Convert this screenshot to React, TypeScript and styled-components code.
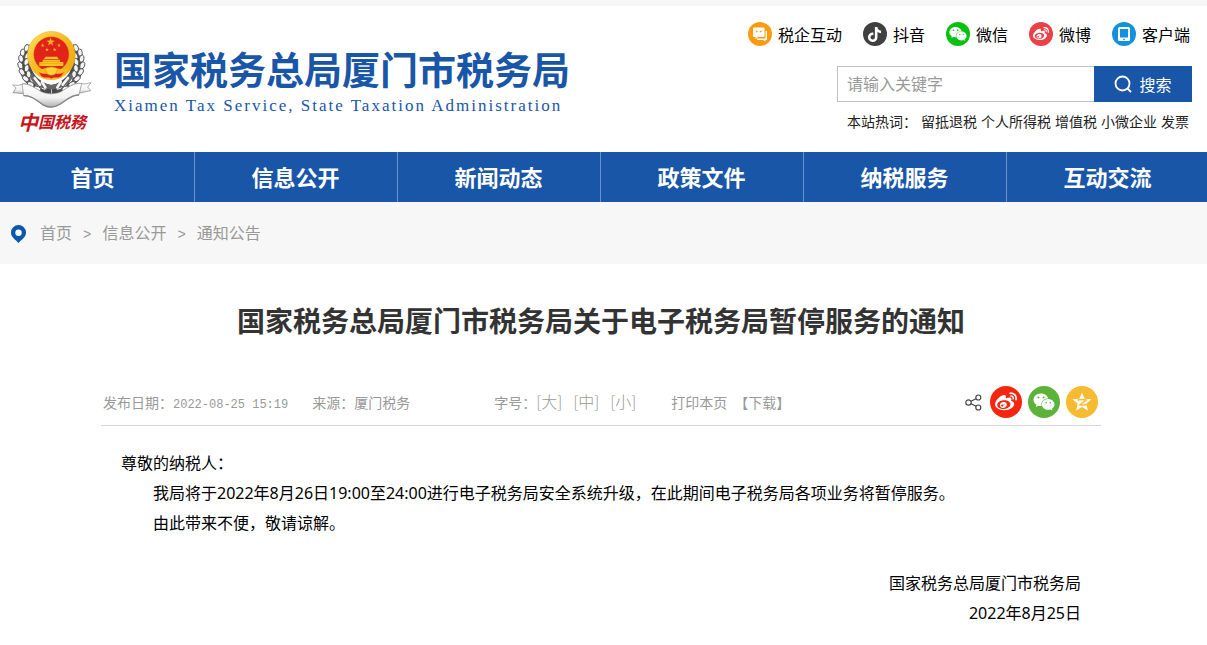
import React from "react";
import styled, { createGlobalStyle } from "styled-components";
import { FaTiktok, FaWeibo, FaWeixin } from "react-icons/fa";

const BLUE = "#1a56a8";
const SANS = '"Noto Sans CJK SC", "Noto Sans", sans-serif';

const GlobalStyle = createGlobalStyle`
  * { box-sizing: border-box; }
  body {
    margin: 0;
    background: #fff;
    color: #000;
    font-family: ${SANS};
    font-size: 16px;
    line-height: 24px;
    overflow-x: hidden;
  }
  a { color: inherit; text-decoration: none; }
  h1, p { margin: 0; }
`;

const Header = styled.header`
  display: flex;
  justify-content: space-between;
  align-items: flex-start;
  height: 152px;
  padding: 16px 15px 0 10px;
  border-top: 6px solid #f7f7f7;
`;

const Brand = styled.a`
  display: flex;
  gap: 20px;
  padding-top: 8px;
`;

const EmblemBox = styled.span`
  display: flex;
  flex-direction: column;
  align-items: center;
  width: 84px;
`;

const Calligraphy = styled.span`
  display: flex;
  align-items: center;
  height: 26px;
  color: #c8141c;
  font-family: "Liberation Serif", "Noto Sans CJK SC", serif;
  font-size: 16px;
  font-style: italic;
  font-weight: 700;
`;

const FirstGlyph = styled.span`
  font-size: 20px;
`;

const BrandText = styled.span`
  display: flex;
  flex-direction: column;
  gap: 5px;
  padding-top: 15px;
  color: ${BLUE};
`;

const BrandName = styled.span`
  font-size: 38px;
  font-weight: 700;
  line-height: 46px;
  white-space: nowrap;
`;

const BrandLatin = styled.span`
  font-family: "Liberation Serif", serif;
  font-size: 17px;
  letter-spacing: 2px;
  line-height: 20px;
  white-space: nowrap;
`;

const Tools = styled.div`
  display: flex;
  flex-direction: column;
  width: 355px;
  align-items: stretch;
`;

const Channels = styled.nav`
  display: flex;
  justify-content: flex-end;
  gap: 21px;
  padding-right: 2px;
`;

const Channel = styled.a`
  display: flex;
  align-items: center;
  gap: 6px;
  white-space: nowrap;
`;

const Disc = styled.span<{ $color: string; $size: number }>`
  display: flex;
  align-items: center;
  justify-content: center;
  width: ${(p) => p.$size}px;
  height: ${(p) => p.$size}px;
  border-radius: 50%;
  background: ${(p) => p.$color};
  color: #fff;
`;

const Search = styled.form`
  display: flex;
  height: 36px;
  margin-top: 20px;
`;

const SearchInput = styled.input`
  flex: 1;
  min-width: 0;
  padding: 0 10px 2px 9px;
  border: 1px solid #bfbfbf;
  border-right: 0;
  background: #fff;
  font: 16px ${SANS};
  &::placeholder { color: #999; opacity: 1; }
`;

const SearchButton = styled.button`
  display: flex;
  align-items: center;
  justify-content: center;
  gap: 7px;
  width: 98px;
  padding: 0;
  border: 0;
  background: ${BLUE};
  color: #fff;
  font: 16px ${SANS};
`;

const HotWords = styled.div`
  display: flex;
  justify-content: flex-end;
  gap: 4px;
  margin-top: 7px;
  padding-right: 3px;
  color: #222;
  font-size: 14px;
  white-space: nowrap;
`;

const MainNav = styled.nav`
  overflow: hidden;
  background: ${BLUE};
`;

const NavGrid = styled.div`
  display: grid;
  grid-template-columns: repeat(6, 1fr);
  margin: 0 -2px 0 -9px;
`;

const NavLink = styled.a`
  padding: 0 1px 2px 0;
  border-left: 1px solid #6a93c9;
  color: #fff;
  font-size: 22px;
  font-weight: 700;
  line-height: 48px;
  text-align: center;
`;

const Crumbs = styled.nav`
  display: flex;
  align-items: center;
  gap: 11px;
  height: 62px;
  padding: 0 11px 2px;
  background: #f7f7f7;
  color: #999;
`;

const Pin = styled.svg`
  margin: 4px 3px 0 0;
`;

const Arrow = styled.span`
  padding-top: 6px;
  font-family: "Liberation Mono", monospace;
  font-size: 14px;
`;

const Page = styled.main`
  padding: 36px 5px 20px 0;
`;

const Article = styled.article`
  max-width: 1000px;
  margin: 0 auto;
`;

const Title = styled.h1`
  color: #333;
  font-size: 28px;
  font-weight: 700;
  line-height: 40px;
  text-align: center;
`;

const Meta = styled.div`
  display: flex;
  align-items: center;
  height: 48px;
  margin-top: 38px;
  padding: 0 3px 0 2px;
  border-bottom: 1px solid #d9d9d9;
  color: #999;
  font-size: 14px;
  white-space: nowrap;
`;

const MetaItem = styled.span<{ $after: number }>`
  display: flex;
  align-items: baseline;
  margin-right: ${(p) => p.$after}px;
`;

const Stamp = styled.time`
  font-family: "Liberation Mono", monospace;
  font-size: 12px;
  line-height: 16px;
`;

const PlainButton = styled.button`
  padding: 0;
  border: 0;
  background: none;
  color: inherit;
  font: inherit;
`;

const SizeButton = styled(PlainButton)`
  width: 37px;
  font-size: 16px;
  font-weight: 300;
  line-height: 24px;
  text-align: left;
`;

const Share = styled.div`
  display: flex;
  align-items: center;
  gap: 6px;
  margin-left: auto;
`;

const ShareMark = styled.svg`
  margin-right: 2px;
`;

const Body = styled.div`
  padding: 22px 20px 0;
  font-family: "Noto Sans", "Noto Sans CJK SC", sans-serif;
  line-height: 30px;
`;

const Paragraph = styled.p`
  text-indent: 2em;
`;

const Signature = styled.div`
  margin-top: 30px;
  text-align: right;
`;

const star = (cx: number, cy: number, r: number) =>
  Array.from({ length: 10 }, (_, i) => {
    const a = (Math.PI * i) / 5 - Math.PI / 2;
    const d = i % 2 ? r * 0.4 : r;
    return `${(cx + d * Math.cos(a)).toFixed(1)},${(cy + d * Math.sin(a)).toFixed(1)}`;
  }).join(" ");

const grains = [
  [80, 84, 20], [68, 98, 8], [82, 108, 24], [63, 116, -10], [79, 126, 16],
  [61, 136, -20], [80, 145, 8], [66, 156, -35], [86, 163, -8], [77, 176, -50],
  [97, 179, -20], [92, 193, -60], [112, 191, -35], [112, 206, -65], [130, 202, -60],
];

function Ear() {
  return (
    <g>
      <path d="M88 72 C56 96 48 152 74 184 C98 210 126 220 153 222 L153 196 C116 186 92 160 88 120 Z" fill="#4a4a4a" />
      {grains.map(([x, y, r]) => (
        <ellipse key={`${x}-${y}`} cx={x} cy={y} rx="7" ry="11" transform={`rotate(${r} ${x} ${y})`} fill="#f4f4f4" stroke="#4a4a4a" strokeWidth="2.500" />
      ))}
    </g>
  );
}

function Emblem() {
  return (
    <svg width="84" height="80" viewBox="30 30 252 240" aria-hidden="true">
      <defs>
        <linearGradient id="gold" x1="0" y1="0" x2="1" y2="1">
          <stop offset="0" stopColor="#ffe25a" />
          <stop offset="0.5" stopColor="#f3b81c" />
          <stop offset="1" stopColor="#e9a914" />
        </linearGradient>
        <linearGradient id="silver" x1="0" y1="0" x2="0" y2="1">
          <stop offset="0" stopColor="#ffffff" />
          <stop offset="0.6" stopColor="#f2f2f2" />
          <stop offset="1" stopColor="#b0b0b0" />
        </linearGradient>
      </defs>
      <Ear />
      <g transform="translate(308 0) scale(-1 1)"><Ear /></g>
      <circle cx="154" cy="106" r="72" fill="url(#gold)" stroke="#dba018" strokeWidth="1" />
      <circle cx="154" cy="103" r="53" fill="#e2231a" stroke="#e0a018" strokeWidth="1" />
      <polygon points={star(152, 66, 13)} fill="#f8b81f" />
      <polygon points={star(128, 76, 6)} fill="#f8b81f" />
      <polygon points={star(141, 89, 6)} fill="#f8b81f" />
      <polygon points={star(164, 89, 6)} fill="#f8b81f" />
      <polygon points={star(177, 76, 6)} fill="#f8b81f" />
      <path d="M132 117 L137 110 H171 L176 117 Z M128 119 H180 V125 H128 Z M118 126 H190 V138 H118 Z" fill="#ffc81c" />
      <path d="M120 131 H188" stroke="#e39a14" strokeWidth="2" />
      <path d="M102 142 C120 158 136 136 154 147 C172 136 188 158 206 142 C202 166 184 180 154 180 C124 180 106 166 102 142 Z" fill="#f5bb1f" />
      <path d="M116 156 C130 166 142 157 154 164 C166 157 178 166 192 156 L184 168 C172 178 164 168 154 176 C144 168 136 178 124 168 Z" fill="#dd2019" />
      <path d="M134 146 Q154 136 174 146 L166 162 Q154 170 142 162 Z" fill="#ffd235" stroke="#dc9714" strokeWidth="2" />
      <path d="M98 160 C108 188 130 192 154 194 C180 192 200 188 210 160 L219 168 C210 196 182 207 154 208 C124 207 98 196 89 168 Z" fill="#666" />
      <path d="M104 174 L120 194 M204 174 L188 194 M126 186 L136 202 M182 186 L172 202" stroke="#f4f4f4" strokeWidth="8" strokeLinecap="round" />
      <path d="M38 195 L48 204 L39 218 L88 223 L93 196 L72 191 Q55 199 38 195 Z" fill="url(#silver)" stroke="#888" strokeWidth="2" />
      <path d="M273 188 L263 201 L272 212 L222 223 L214 196 L236 190 Q256 195 273 188 Z" fill="url(#silver)" stroke="#888" strokeWidth="2" />
      <path d="M66 192 C90 190 106 206 126 216 C142 223 165 223 181 216 C202 204 220 188 245 190 L237 225 C214 224 200 240 181 252 Q154 270 128 254 C108 240 94 226 71 227 Z" fill="url(#silver)" stroke="#888" strokeWidth="2" />
      <path d="M71 227 C94 226 108 240 128 254 Q154 270 181 252 C200 240 214 224 237 225" fill="none" stroke="#858585" strokeWidth="4" />
    </svg>
  );
}

const icons = {
  chat: (
    <svg width="16" height="16" viewBox="0 0 16 16" aria-hidden="true">
      <path d="M5 12.500V14h6l2.500 1.500V14H15V5h-1.500v7.500z" fill="#fff" />
      <path d="M2 1.500h9.500a1 1 0 0 1 1 1v7.500a1 1 0 0 1-1 1H6L3.500 13v-2H2a1 1 0 0 1-1-1V2.500a1 1 0 0 1 1-1z" fill="#fff" />
      <path d="M3.800 5.500h1.800M7.800 5.500h1.800" stroke="#fd9a0f" strokeWidth="1.500" />
    </svg>
  ),
  tablet: (
    <svg width="12" height="16" viewBox="0 0 12 16" aria-hidden="true">
      <rect x="0" y="1" width="12" height="14" rx="1.500" fill="#fff" />
      <rect x="2" y="3" width="8" height="8.500" fill="#1491dc" />
      <circle cx="6" cy="13.300" r="0.900" fill="#1491dc" />
    </svg>
  ),
};

const channels = [
  { label: "税企互动", color: "#fd9a0f", icon: icons.chat },
  { label: "抖音", color: "#404040", icon: <FaTiktok size={15} /> },
  { label: "微信", color: "#07c10f", icon: <FaWeixin size={18} /> },
  { label: "微博", color: "#ea4148", icon: <FaWeibo size={16} /> },
  { label: "客户端", color: "#1491dc", icon: icons.tablet },
];

const hotWords = ["留抵退税", "个人所得税", "增值税", "小微企业", "发票"];
const sections = ["首页", "信息公开", "新闻动态", "政策文件", "纳税服务", "互动交流"];

export default function App() {
  return (
    <>
      <GlobalStyle />
      <Header>
        <Brand href="#">
          <EmblemBox>
            <Emblem />
            <Calligraphy><FirstGlyph>中</FirstGlyph>国税務</Calligraphy>
          </EmblemBox>
          <BrandText>
            <BrandName>国家税务总局厦门市税务局</BrandName>
            <BrandLatin lang="en">Xiamen Tax Service, State Taxation Administration</BrandLatin>
          </BrandText>
        </Brand>
        <Tools>
          <Channels>
            {channels.map((c) => (
              <Channel href="#" key={c.label}>
                <Disc $color={c.color} $size={24}>{c.icon}</Disc>
                {c.label}
              </Channel>
            ))}
          </Channels>
          <Search onSubmit={(e) => e.preventDefault()}>
            <SearchInput type="text" placeholder="请输入关键字" aria-label="请输入关键字" />
            <SearchButton type="submit">
              <svg width="18" height="18" viewBox="0 0 18 18" fill="none" stroke="#fff" strokeWidth="1.800" aria-hidden="true">
                <circle cx="8.500" cy="8.500" r="7" />
                <path d="M13.500 13.500L17 17" />
              </svg>
              搜索
            </SearchButton>
          </Search>
          <HotWords>
            <span>本站热词：</span>
            {hotWords.map((w) => <a href="#" key={w}>{w}</a>)}
          </HotWords>
        </Tools>
      </Header>

      <MainNav>
        <NavGrid>
          {sections.map((s) => <NavLink href="#" key={s}>{s}</NavLink>)}
        </NavGrid>
      </MainNav>

      <Crumbs>
        <Pin width="15" height="18" viewBox="0 0 15 18" aria-hidden="true">
          <path d="M7.500 0A7.500 7.500 0 0 0 0 7.500C0 12.300 4.500 14.500 7.500 18C10.500 14.500 15 12.300 15 7.500A7.500 7.500 0 0 0 7.500 0Z" fill="#0a57ae" />
          <circle cx="7.500" cy="7.700" r="3.200" fill="#fff" />
        </Pin>
        <a href="#">首页</a>
        <Arrow>&gt;</Arrow>
        <a href="#">信息公开</a>
        <Arrow>&gt;</Arrow>
        <a href="#">通知公告</a>
      </Crumbs>

      <Page>
        <Article>
          <Title>国家税务总局厦门市税务局关于电子税务局暂停服务的通知</Title>
          <Meta>
            <MetaItem $after={24}>发布日期：<Stamp>2022-08-25 15:19</Stamp></MetaItem>
            <MetaItem $after={84}>来源：厦门税务</MetaItem>
            <MetaItem $after={24}>
              字号：
              <SizeButton type="button">[大]</SizeButton>
              <SizeButton type="button">[中]</SizeButton>
              <SizeButton type="button">[小]</SizeButton>
            </MetaItem>
            <MetaItem $after={7}><PlainButton type="button">打印本页</PlainButton></MetaItem>
            <a href="#">【下载】</a>
            <Share>
              <ShareMark width="17" height="18" viewBox="0 0 17 18" fill="none" stroke="#444" strokeWidth="1.200" aria-hidden="true">
                <circle cx="3.500" cy="9.500" r="2.700" />
                <circle cx="13.300" cy="4.500" r="2.500" />
                <circle cx="13.300" cy="14.500" r="2.500" />
                <path d="M6 8.300L11 5.700M6 10.700L11 13.300" />
              </ShareMark>
              <Disc as="a" href="#" aria-label="微博" $color="#f5260f" $size={32}><FaWeibo size={22} /></Disc>
              <Disc as="a" href="#" aria-label="微信" $color="#5db33a" $size={32}><FaWeixin size={22} /></Disc>
              <Disc as="a" href="#" aria-label="QQ空间" $color="#f6bb31" $size={32}>
                <svg width="20" height="20" viewBox="0 0 20 20" aria-hidden="true">
                  <path d="M10 .5L12.600 6.700L19.500 7.300L14.300 11.800L15.900 18.500L10 15L4.100 18.500L5.700 11.800L.5 7.300L7.400 6.700Z" fill="#fff" />
                  <path d="M5.800 8Q10 7 14.200 8L8 12.700Q12 13.400 16 12.300" fill="none" stroke="#f6bb31" strokeWidth="1.500" />
                </svg>
              </Disc>
            </Share>
          </Meta>
          <Body>
            <p>尊敬的纳税人：</p>
            <Paragraph>我局将于2022年8月26日19:00至24:00进行电子税务局安全系统升级，在此期间电子税务局各项业务将暂停服务。</Paragraph>
            <Paragraph>由此带来不便，敬请谅解。</Paragraph>
            <Signature>
              <p>国家税务总局厦门市税务局</p>
              <p>2022年8月25日</p>
            </Signature>
          </Body>
        </Article>
      </Page>
    </>
  );
}
